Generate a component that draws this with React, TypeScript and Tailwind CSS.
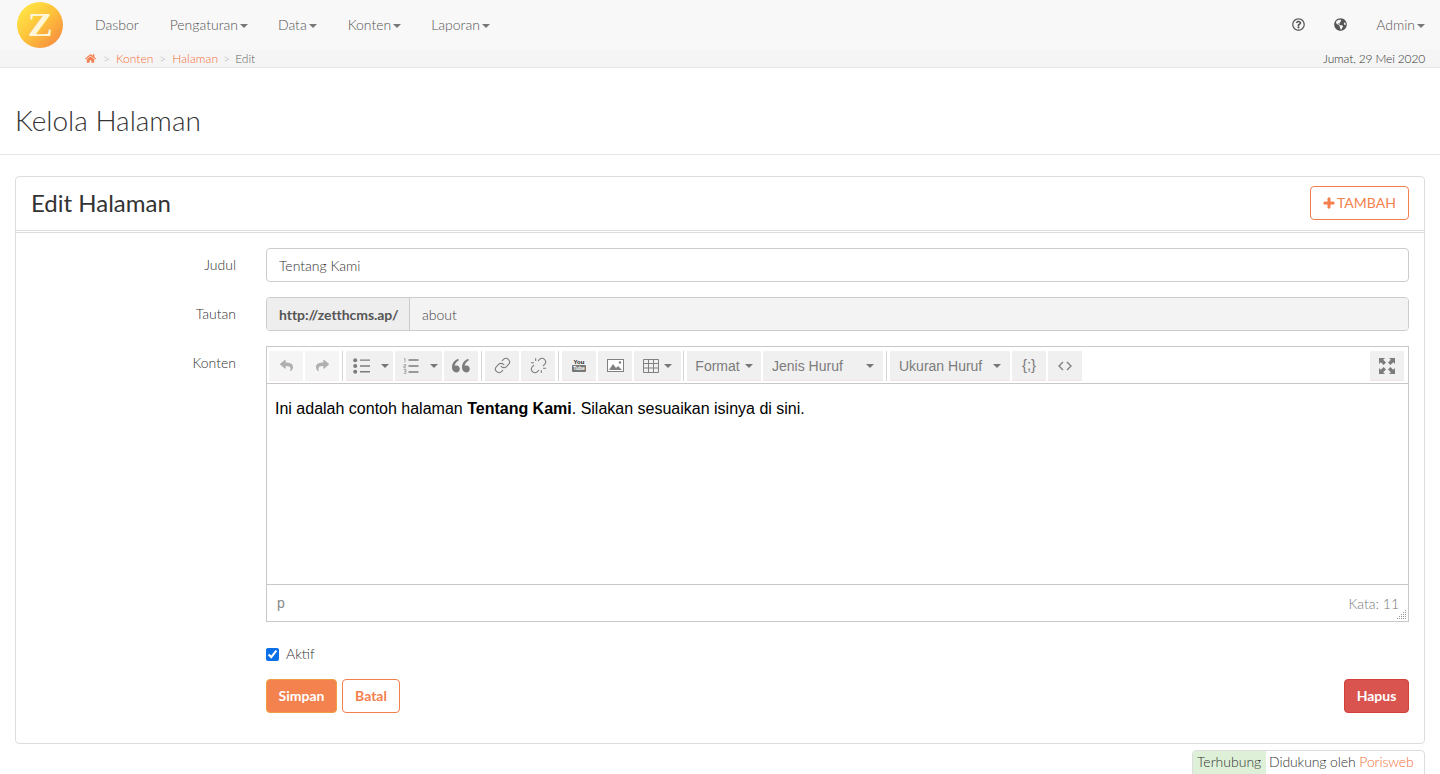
import { FaHome, FaRegQuestionCircle, FaGlobeAmericas, FaPlus, FaReply, FaShare } from "react-icons/fa"
import { RiDoubleQuotesL } from "react-icons/ri"
import { Link as LinkIcon, Unlink } from "lucide-react"
import type { ReactNode } from "react"

const menu = [
  { label: "Dasbor", pad: "px-[15px] pr-[16px]" },
  { label: "Pengaturan", caret: true, pad: "px-[15px]" },
  { label: "Data", caret: true, pad: "px-[15px] pr-[16px]" },
  { label: "Konten", caret: true, pad: "px-[15px]" },
  { label: "Laporan", caret: true, pad: "px-[15px]" },
]

const Caret = ({ className = "ml-[2px] border-t-[#777]" }: { className?: string }) => (
  <span className={`inline-block h-0 w-0 border-x-[4px] border-t-[4px] border-x-transparent align-middle ${className}`} />
)

const ToolBtn = ({ className, children, dim }: { className: string; children: ReactNode; dim?: boolean }) => (
  <div className={`flex h-[30px] items-center rounded-[1px] border-b border-b-[#f3e3e6] bg-[#f0f0f0] text-[#7c7c7c] ${className} ${dim ? "opacity-60" : ""}`}>
    {children}
  </div>
)

const Sep = ({ className = "mx-[3px]" }: { className?: string }) => <div className={`h-[30px] w-px bg-[#d4d4d4] ${className}`} />

const ToolCaret = () => <Caret className="border-t-[#777]" />

const Row = ({ label, children, className = "" }: { label: string; children: ReactNode; className?: string }) => (
  <div className={`flex ${className}`}>
    <label className="w-[205px] pt-[6px] text-right text-[14px] font-light text-[#333]">{label}</label>
    <div className="ml-[30px] min-w-0 flex-1">{children}</div>
  </div>
)

const ListUlIcon = () => (
  <svg width="17" height="16" viewBox="0 0 17 16" fill="currentColor">
    <circle cx="2.2" cy="2.2" r="2" />
    <circle cx="2.2" cy="8" r="2" />
    <circle cx="2.2" cy="13.8" r="2" />
    <path d="M7 1.4h10v1.4H7zM7 7.3h10v1.4H7zM7 13.1h10v1.4H7z" />
  </svg>
)

const ListOlIcon = () => (
  <svg width="16" height="16" viewBox="0 0 16 16" fill="none" stroke="currentColor">
    <path d="M5.5 2h10M5.5 8h10M5.5 14h10" strokeWidth="1.3" />
    <path d="M1 1l1-.6v4M.6 6.6h2.2v1.6H.8v1.6h2.2M.6 11.6h2.4v1.7H1.2M3 13.3V15.4H.6" strokeWidth=".6" />
  </svg>
)

const ImageIcon = () => (
  <svg width="17" height="13" viewBox="0 0 17 13" fill="none">
    <rect x=".5" y=".5" width="16" height="12" fill="#fff" stroke="#808080" />
    <path d="M2 11 6 5l3 4 2-2 4 4z" fill="#808080" />
    <circle cx="13" cy="3.5" r="1.2" fill="#808080" />
  </svg>
)

const TableIcon = () => (
  <svg width="16" height="14" viewBox="0 0 16 14" fill="none" stroke="#808080" strokeWidth="1">
    <path d="M.5.5h15v13H.5zM.5 4.5h15M.5 9h15M5.5.5v13M10.5.5v13" />
  </svg>
)

export default function App() {
  return (
    <div className="h-[774px] overflow-hidden bg-white font-['Lato',sans-serif] text-[14px] text-[#555]">
      <div className="flex h-[50px] items-center bg-[#f8f8f8]">
        <div className="ml-[17px] flex h-[46px] w-[46px] items-center justify-center rounded-full bg-gradient-to-br from-[#fff04a] via-[#fdc13a] to-[#f3803f]">
          <span className="scale-x-[1.1] font-['Liberation_Serif',serif] text-[34px] leading-none font-bold text-[#fff6d8]">Z</span>
        </div>
        <nav className="ml-[17px] flex items-center pb-[2px]">
          {menu.map((m) => (
            <div key={m.label} className={`font-light text-[#555] ${m.pad}`}>
              {m.label}
              {m.caret && <Caret />}
            </div>
          ))}
        </nav>
        <div className="ml-auto flex items-center pr-[15px] pb-[2px] text-[#555]">
          <FaRegQuestionCircle className="mr-[29px] text-[13px]" />
          <FaGlobeAmericas className="mr-[29px] text-[13px]" />
          <div className="font-light">
            Admin
            <Caret />
          </div>
        </div>
      </div>
      <div className="flex h-[18px] items-center justify-between border-b border-b-[#e5e5e5] bg-[#f5f5f5] pr-[15px] pl-[85px] text-[12px] font-light">
        <div className="flex items-center">
          <FaHome className="text-[11px] text-[#f47f4e]" />
          <span className="mr-[6px] ml-[7px] text-[#bbb]">&gt;</span>
          <span className="text-[#f26f38]">Konten</span>
          <span className="mx-[6px] text-[#bbb]">&gt;</span>
          <span className="tracking-[0.1px] text-[#f26f38]">Halaman</span>
          <span className="mx-[5px] text-[#bbb]">&gt;</span>
          <span className="text-[#666]">Edit</span>
        </div>
        <span className="tracking-[-0.15px] text-[#333]">Jumat, 29 Mei 2020</span>
      </div>

      <div className="flex h-[87px] items-end border-b border-b-[#e5e5e5] px-[15px] pb-[16px]">
        <h1 className="text-[28px] leading-[36px] font-light text-[#333]">Kelola Halaman</h1>
      </div>

      <div className="mx-[15px] mt-[21px] h-[568px] rounded-[4px] border border-[#ddd]">
        <div className="flex h-[54px] items-center justify-between border-b border-b-[#ddd] px-[15px] pb-[2px]">
          <h2 className="text-[24px] font-normal text-[#333]">Edit Halaman</h2>
          <button className="flex h-[34px] w-[99px] items-center justify-center rounded-[4px] border border-[#f47f4e] text-[14px] text-[#f47f4e]">
            <FaPlus className="mr-[2px] stroke-[30px] text-[12px]" />
            TAMBAH
          </button>
        </div>
        <div className="mt-[1px] border-t border-t-[#ddd] px-[15px] pt-[15px]">
          <Row label="Judul">
            <div className="flex h-[34px] items-center rounded-[4px] border border-[#ccc] px-3 font-light text-[#333]">Tentang Kami</div>
          </Row>
          <Row label="Tautan" className="mt-[15px]">
            <div className="flex h-[34px] overflow-hidden rounded-[4px] border border-[#ccc]">
              <div className="flex w-[143px] items-center border-r border-r-[#ccc] bg-[#eee] pl-3 font-bold tracking-[-0.06px] whitespace-nowrap text-[#555]">http://zetthcms.ap/</div>
              <div className="flex flex-1 items-center bg-[#f3f3f3] px-3 font-light text-[#444]">about</div>
            </div>
          </Row>
          <Row label="Konten" className="mt-[15px]">
            <div className="h-[276px] border border-[#c8c8c8]">
              <div className="flex h-[37px] items-start border-b border-b-[#c8c8c8] pt-[4px] pl-[2px] font-['Liberation_Sans',sans-serif] text-[14px] text-[#7c7c7c]">
                <div className="flex gap-[2px]">
                  <ToolBtn className="w-[34px] justify-center" dim><FaReply className="text-[13px]" /></ToolBtn>
                  <ToolBtn className="w-[34px] justify-center" dim><FaShare className="text-[13px]" /></ToolBtn>
                </div>
                <Sep />
                <div className="flex gap-[2px]">
                  <ToolBtn className="w-[47px] gap-[11px] pl-[7px]"><ListUlIcon /><ToolCaret /></ToolBtn>
                  <ToolBtn className="w-[47px] gap-[11px] pl-[8px]"><ListOlIcon /><ToolCaret /></ToolBtn>
                  <ToolBtn className="w-[34px] justify-center"><RiDoubleQuotesL className="text-[24px]" /></ToolBtn>
                </div>
                <Sep />
                <div className="flex gap-[2px]">
                  <ToolBtn className="w-[34px] justify-center"><LinkIcon size={17} strokeWidth={1.5} /></ToolBtn>
                  <ToolBtn className="w-[34px] justify-center"><Unlink size={17} strokeWidth={1.5} /></ToolBtn>
                </div>
                <Sep />
                <div className="flex gap-[2px]">
                  <ToolBtn className="w-[34px] justify-center">
                    <div className="flex flex-col items-center font-['Liberation_Sans',sans-serif] text-[6px] leading-[6px] font-bold">
                      <span className="text-[#222]">You</span>
                      <span className="rounded-[1px] bg-[#777] px-[1px] text-[5px] leading-[7px] text-white">Tube</span>
                    </div>
                  </ToolBtn>
                  <ToolBtn className="w-[34px] justify-center"><ImageIcon /></ToolBtn>
                  <ToolBtn className="w-[47px] gap-[5px] pl-[9px]"><TableIcon /><ToolCaret /></ToolBtn>
                </div>
                <Sep className="mr-[3px] ml-[2px]" />
                <div className="flex gap-[2px]">
                  <ToolBtn className="w-[74px] justify-center gap-[5px] pt-[1px]">Format<ToolCaret /></ToolBtn>
                  <ToolBtn className="w-[120px] justify-between px-[9px] pt-[1px]">Jenis Huruf<ToolCaret /></ToolBtn>
                </div>
                <Sep />
                <div className="flex gap-[2px]">
                  <ToolBtn className="w-[120px] justify-between px-[9px] pt-[1px]">Ukuran Huruf<ToolCaret /></ToolBtn>
                  <ToolBtn className="w-[34px] justify-center"><span className="text-[15px]">{"{;}"}</span></ToolBtn>
                  <ToolBtn className="w-[34px] justify-center">
                    <svg width="14" height="10" viewBox="0 0 14 10" fill="none" stroke="currentColor" strokeWidth="1.3"><path d="M5 1 1 5l4 4M9 1l4 4-4 4" /></svg>
                  </ToolBtn>
                </div>
                <div className="mr-[4px] ml-auto">
                  <ToolBtn className="w-[34px] justify-center">
                    <svg width="16" height="16" viewBox="0 0 16 16" fill="currentColor"><path d="M0 0h6L4.2 1.8 7 4.6 4.6 7 1.8 4.2 0 6zM16 0v6l-1.8-1.8L11.4 7 9 4.6l2.8-2.8L10 0zM0 16v-6l1.8 1.8L4.6 9 7 11.4l-2.8 2.8L6 16zM16 16h-6l1.8-1.8L9 11.4 11.4 9l2.8 2.8L16 10z" /></svg>
                  </ToolBtn>
                </div>
              </div>
              <div className="h-[200px] px-[8px] pt-[15px] font-['Liberation_Sans',sans-serif] text-[16px] leading-[20px] text-black">
                Ini adalah contoh halaman <b>Tentang Kami</b>. Silakan sesuaikan isinya di sini.
              </div>
              <div className="relative flex h-[37px] items-center justify-between border-t border-t-[#c8c8c8] pr-[9px] pl-[10px] text-[#888]">
                <span className="font-['Liberation_Sans',sans-serif] text-[14px]">p</span>
                <span className="pt-[1px] text-[14px] font-light text-[#777]">Kata: 11</span>
                <svg className="absolute right-[1px] bottom-[1px]" width="10" height="10" viewBox="0 0 10 10" fill="#999">
                  <path d="M8 0h1v1H8zM6 2h1v1H6zM8 2h1v1H8zM4 4h1v1H4zM6 4h1v1H6zM8 4h1v1H8zM2 6h1v1H2zM4 6h1v1H4zM6 6h1v1H6zM8 6h1v1H8zM0 8h1v1H0zM2 8h1v1H2zM4 8h1v1H4zM6 8h1v1H6zM8 8h1v1H8z" />
                </svg>
              </div>
            </div>
            <label className="mt-[25px] flex items-center">
              <input type="checkbox" defaultChecked className="m-0 h-[13px] w-[13px] accent-[#0b6fe8]" />
              <span className="ml-[7px] leading-[14px] font-light text-[#333]">Aktif</span>
            </label>
            <div className="mt-[18px] flex items-center">
              <button className="h-[34px] w-[71px] rounded-[4px] border border-[#f0a044] bg-[#f4824f] pb-[1px] font-bold text-white">Simpan</button>
              <button className="ml-[5px] h-[34px] w-[58px] rounded-[4px] border border-[#f47f4e] pb-[1px] font-bold text-[#f47f4e]">Batal</button>
              <button className="ml-auto h-[34px] w-[65px] rounded-[4px] border border-[#d43f3a] bg-[#d9534f] pb-[1px] font-bold text-white">Hapus</button>
            </div>
          </Row>
        </div>
      </div>

      <div className="mt-[6px] mr-[15px] ml-auto flex h-[30px] w-[233px] rounded-t-[4px] border border-[#ddd] font-light text-[#333]">
        <div className="h-full w-[73px] bg-[#dff0d8] pl-[4px]">Terhubung</div>
        <div className="pl-[3px] tracking-[-0.1px]">Didukung oleh <span className="text-[#f26f38]">Porisweb</span></div>
      </div>
    </div>
  )
}
